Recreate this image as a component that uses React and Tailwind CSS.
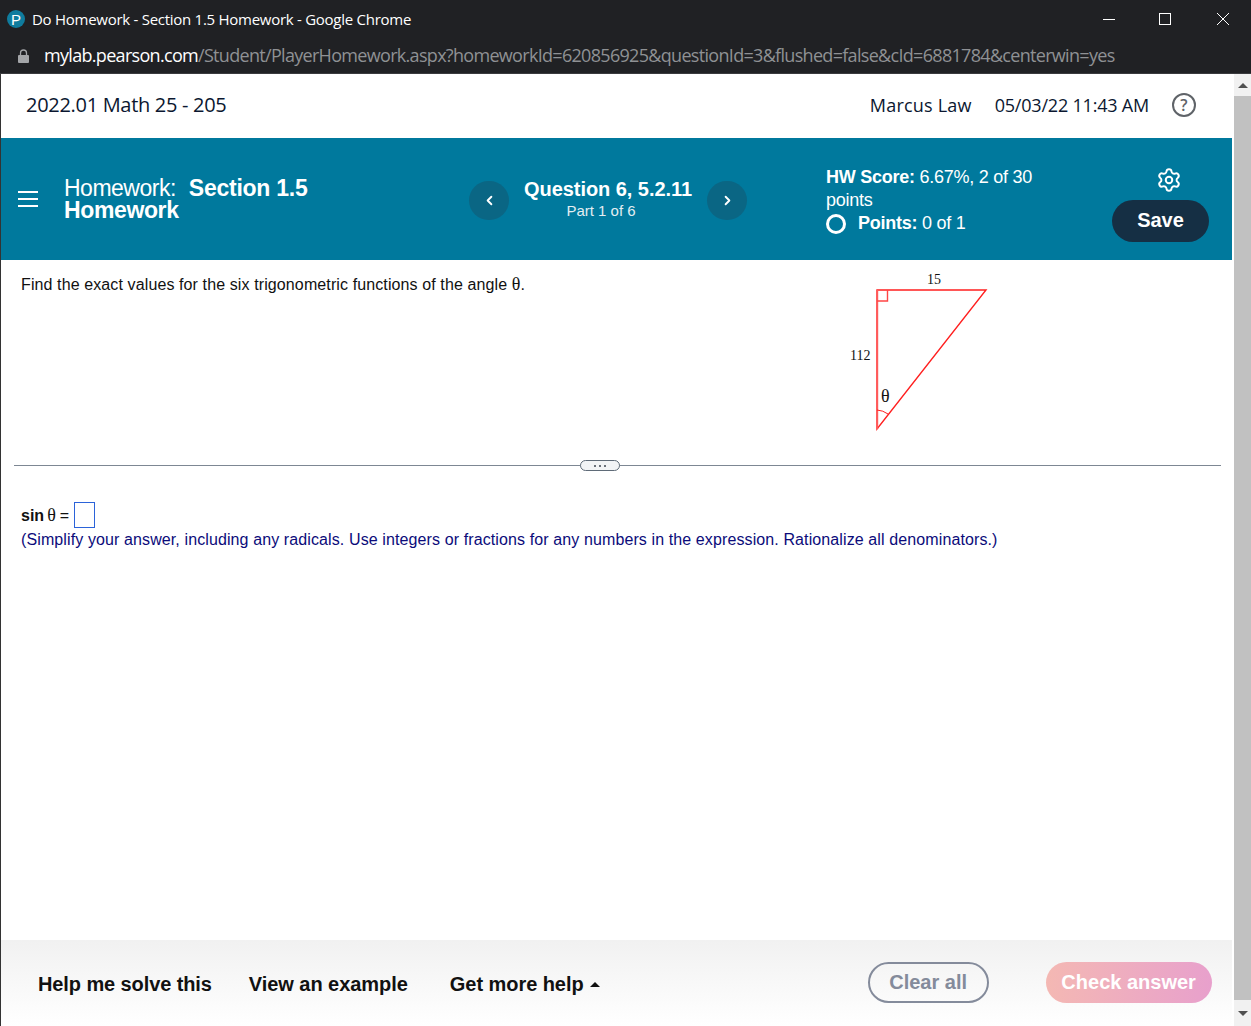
import React from 'react';
import { Settings, ChevronLeft, ChevronRight } from 'lucide-react';

const ARIAL = 'font-["Liberation_Sans",Arial,sans-serif]';
const SERIF = 'font-["Liberation_Serif","Times_New_Roman",serif]';

const ChromeBar = () => (
  <div className='shrink-0 font-["Open_Sans",sans-serif]'>
    <div className="flex h-[38px] items-center bg-[#202124] pl-[7px] text-white">
      <div className='flex h-[18px] w-[18px] items-center justify-center rounded-full bg-[#0f7c9e] font-["Liberation_Sans",sans-serif] text-[15px] leading-none'>P</div>
      <div className="ml-[7px] flex-1 text-[15px] tracking-[-0.27px]">Do Homework - Section 1.5 Homework - Google Chrome</div>
      <svg width="14" height="14" viewBox="0 0 14 14" className="mr-[42px]" fill="none" stroke="#fff" strokeWidth="1"><path d="M1 7.5h12" /></svg>
      <svg width="14" height="14" viewBox="0 0 14 14" className="mr-[44px]" fill="none" stroke="#fff" strokeWidth="1"><rect x="1.5" y="1.5" width="11" height="11" /></svg>
      <svg width="14" height="14" viewBox="0 0 14 14" className="mr-[21px]" fill="none" stroke="#fff" strokeWidth="1"><path d="M1 1l12 12M13 1L1 13" /></svg>
    </div>
    <div className="flex h-[36px] items-center border-b border-[#3a3b3e] bg-[#202124] pl-[18px]">
      <svg width="11" height="14" viewBox="0 0 11 14" fill="#a3a5a8"><path d="M1 6h9a1 1 0 0 1 1 1v6a1 1 0 0 1-1 1H1a1 1 0 0 1-1-1V7a1 1 0 0 1 1-1z" /><path d="M2.5 6V4a3 3 0 0 1 6 0v2" fill="none" stroke="#a3a5a8" strokeWidth="1.3" /></svg>
      <div className="ml-[15px] whitespace-nowrap text-[18px] tracking-[-0.69px] text-[#8f9194]">
        <span className="text-white">mylab.pearson.com</span>/Student/PlayerHomework.aspx?homeworkId=620856925&amp;questionId=3&amp;flushed=false&amp;cId=6881784&amp;centerwin=yes
      </div>
    </div>
  </div>
);

const TopRow = () => (
  <div className='flex h-[64px] shrink-0 items-center pb-[2px] pl-[25px] pr-[36px] font-["Open_Sans",sans-serif] text-[#0b1730]'>
    <div className="flex-1 text-[20px] tracking-[-0.3px]">2022.01 Math 25 - 205</div>
    <div className="text-[18px] tracking-[0.2px]">Marcus Law</div>
    <div className="ml-[23px] text-[18px] tracking-[-0.2px]">05/03/22 11:43 AM</div>
    <div className="ml-[23px] flex h-[24px] w-[24px] items-center justify-center rounded-full border-2 border-[#5f6368] text-[16px] font-semibold leading-none text-[#5f6368]">?</div>
  </div>
);

const NavButton = ({ children }) => (
  <div className="mt-[2px] flex h-[39px] w-[40px] shrink-0 items-center justify-center rounded-full bg-[#0a6684] text-white">{children}</div>
);

const TealBar = () => (
  <div className={`flex h-[122px] shrink-0 items-center bg-[#00799d] text-white ${ARIAL}`}>
    <div className="ml-[17px] flex w-[20px] flex-col gap-[5px]">
      <div className="h-[2px] bg-white" />
      <div className="h-[2px] bg-white" />
      <div className="h-[2px] bg-white" />
    </div>
    <div className="ml-[26px] w-[405px] text-[23px] leading-[22px] tracking-[-0.5px]">
      Homework:<span className="ml-[13px] font-bold tracking-[-0.25px]">Section 1.5</span>
      <div className="font-bold tracking-[-0.37px]">Homework</div>
    </div>
    <NavButton><ChevronLeft size={15} strokeWidth={3} /></NavButton>
    <div className="flex w-[198px] flex-col items-center">
      <div className="text-[20px] font-bold leading-[24px] tracking-[-0.05px]">Question 6, 5.2.11</div>
      <div className="mr-[14px] text-[15px] leading-[20px] text-[#e3eef2]">Part 1 of 6</div>
    </div>
    <NavButton><ChevronRight size={15} strokeWidth={3} /></NavButton>
    <div className="ml-[79px] mt-[3px] flex-1 text-[18px] leading-[23px] tracking-[-0.25px]">
      <div><span className="font-bold">HW Score:</span> 6.67%, 2 of 30</div>
      <div>points</div>
      <div className="flex items-center">
        <div className="h-[20px] w-[20px] rounded-full border-[3px] border-white" />
        <div className="ml-[12px]"><span className="font-bold">Points:</span> 0 of 1</div>
      </div>
    </div>
    <div className="mr-[23px] mt-[10px] flex w-[97px] flex-col items-center">
      <Settings size={26} strokeWidth={1.8} className="ml-[17px]" />
      <div className="mt-[7px] flex h-[42px] w-[97px] items-center justify-center rounded-full bg-[#152f44] pb-[2px] text-[20px] font-bold">Save</div>
    </div>
  </div>
);

const Triangle = () => (
  <svg width="160" height="175" viewBox="0 0 160 175" className="mr-[232px] mt-[5px] shrink-0" fill="none">
    <path d="M37 25H146L37 164Z" stroke="#ff1f1f" strokeWidth="1.4" />
    <path d="M37.5 25v139" stroke="#ff5a5a" strokeWidth="1.4" />
    <path d="M37 36h10.5V25" stroke="#ff4545" strokeWidth="1.4" />
    <path d="M37 145a21 21 0 0 1 11 4" stroke="#ff1f1f" strokeWidth="1" />
    <text x="94" y="19" textAnchor="middle" fontFamily="Liberation Serif, serif" fontSize="14" fill="#111">15</text>
    <text x="10" y="95" fontFamily="Liberation Serif, serif" fontSize="14" fill="#111">112</text>
    <text x="41" y="137" fontFamily="Liberation Serif, serif" fontSize="18" fill="#111">θ</text>
  </svg>
);

const Divider = () => (
  <div className="relative ml-[13px] mr-[11px] h-px shrink-0 bg-[#7d8793]">
    <div className="absolute left-[566px] top-[-5px] flex h-[11px] w-[40px] items-center justify-center gap-[3px] rounded-full border border-[#5f6b78] bg-[#f2f4f6]">
      <div className="h-[2px] w-[2px] rounded-full bg-[#3c4650]" />
      <div className="h-[2px] w-[2px] rounded-full bg-[#3c4650]" />
      <div className="h-[2px] w-[2px] rounded-full bg-[#3c4650]" />
    </div>
  </div>
);

const Footer = () => (
  <div className={`flex h-[86px] shrink-0 items-center bg-gradient-to-b from-[#f1f1f1] to-white pl-[37px] text-[20px] font-bold text-[#111] ${ARIAL}`}>
    <div className="mt-[2px] tracking-[-0.1px]">Help me solve this</div>
    <div className="ml-[37px] mt-[2px] tracking-[-0.05px]">View an example</div>
    <div className="ml-[42px] mt-[2px] tracking-[-0.05px]">Get more help</div>
    <div className="ml-[6px] mt-[2px] h-0 w-0 border-x-[5px] border-b-[5px] border-x-transparent border-b-[#111]" />
    <div className="ml-[268px] mb-[2px] flex h-[41px] w-[121px] items-center justify-center rounded-full border-[2px] border-[#848b9b] text-[#848b9b]">Clear all</div>
    <div className="ml-[57px] mb-[2px] flex h-[41px] w-[166px] items-center justify-center rounded-full bg-gradient-to-r from-[#f4b8b3] to-[#e8a0cc] text-white">Check answer</div>
  </div>
);

const Scrollbar = () => (
  <div className="flex w-[19px] shrink-0 flex-col border-l-[2px] border-white bg-[#f1f1f1]">
    <div className="flex h-[22px] items-center justify-center">
      <div className="h-0 w-0 border-x-[5px] border-b-[5px] border-x-transparent border-b-[#505050]" />
    </div>
    <div className="flex-1 bg-[#c1c1c1]" />
    <div className="flex h-[26px] items-center justify-center">
      <div className="h-0 w-0 border-x-[5px] border-t-[5px] border-x-transparent border-t-[#505050]" />
    </div>
  </div>
);

export default function App() {
  return (
    <div className="flex h-[1026px] w-[1251px] flex-col overflow-hidden bg-white">
      <ChromeBar />
      <div className="flex min-h-0 flex-1">
        <div className="flex min-w-0 flex-1 flex-col border-l border-[#333]">
          <TopRow />
          <TealBar />
          <div className="flex h-[205px] shrink-0 justify-between">
            <div className={`pl-[20px] pt-[15px] text-[16px] leading-[20px] tracking-[0.11px] text-[#111] ${ARIAL}`}>
              Find the exact values for the six trigonometric functions of the angle <span className={`text-[18px] leading-[18px] ${SERIF}`}>θ</span>.
            </div>
            <Triangle />
          </div>
          <Divider />
          <div className={`flex-1 pl-[20px] pt-[35px] text-[16px] ${ARIAL}`}>
            <div className="flex h-[27px] items-center text-[#111]">
              <span className="mt-[2px] font-bold">sin</span>
              <span className={`ml-[3px] mt-[2px] text-[18px] ${SERIF}`}>θ</span>
              <span className="ml-[4px] mt-[2px]">=</span>
              <div className="ml-[5px] h-[26px] w-[21px] border border-[#2b63d9]" />
            </div>
            <div className="mt-[2px] leading-[20px] tracking-[0.11px] text-[#0b0b7a]">
              (Simplify your answer, including any radicals. Use integers or fractions for any numbers in the expression. Rationalize all denominators.)
            </div>
          </div>
          <Footer />
        </div>
        <Scrollbar />
      </div>
    </div>
  );
}
